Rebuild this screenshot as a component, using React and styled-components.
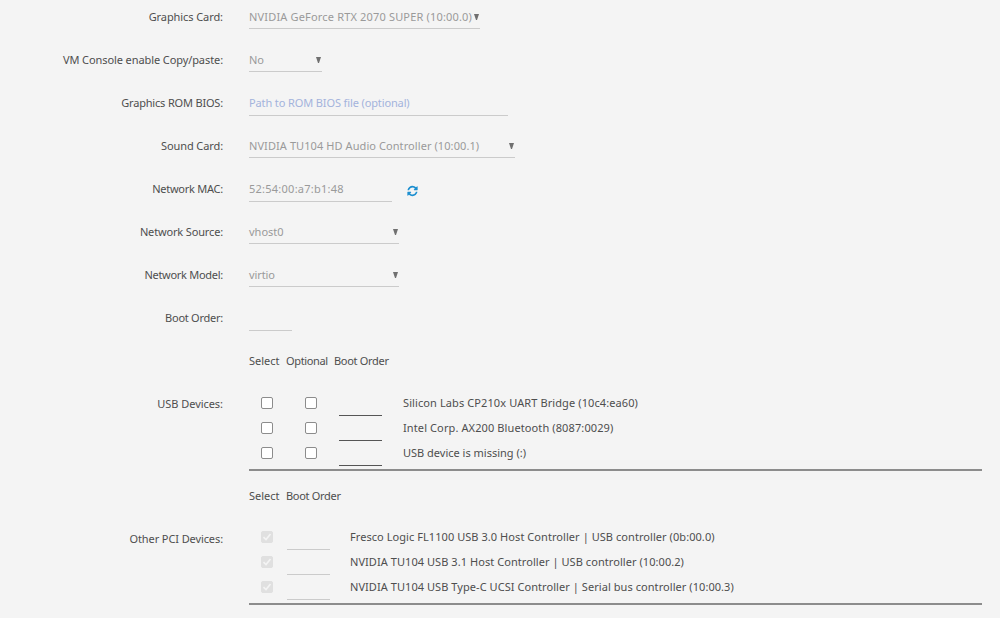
import styled, { createGlobalStyle } from "styled-components";

///////////////////// STYLED COMPONENTS /////////////////////
const GlobalStyle = createGlobalStyle`
    * {
        box-sizing: border-box;
    }

    body {
        margin: 0;
        background-color: #f4f4f4;
        color: #4e4e4e;
        font-family: "Noto Sans", "Open Sans", sans-serif;
        font-size: 11px;
        overflow: hidden;
    }
`

const Form = styled.main`
    width: 1000px;
    height: 618px;
    overflow: hidden;
`

const Row = styled.div`
    display: grid;
    grid-template-columns: 223px 733px;
    column-gap: 26px;
    height: ${props => props.$height || 43}px;
    margin-top: ${props => props.$shift || 0}px;
`

const Label = styled.label`
    height: 41px;
    line-height: ${props => props.$line || 41}px;
    text-align: right;
    white-space: nowrap;
    letter-spacing: ${props => props.$spacing || 0}px;
`

const Field = styled.div`
    display: flex;
    align-items: flex-start;
`

const Control = styled.div`
    display: flex;
    justify-content: space-between;
    width: ${props => props.$width}px;
    height: ${props => props.$height || 33}px;
    border-bottom: 1px solid #cbcbcb;
    line-height: 41px;
    white-space: nowrap;
    color: ${props => props.$hint ? "#a3b3dc" : "#9a9a9a"};
`

const Text = styled.span`
    letter-spacing: ${props => props.$spacing || 0}px;
`

const Arrow = styled.svg`
    flex-shrink: 0;
    width: 5px;
    height: 6px;
    margin: 18px 1px 0 0;
    fill: #707070;
`

const RefreshIcon = styled.svg`
    width: 11px;
    height: 12px;
    margin: 16.5px 0 0 15px;
    fill: #1c8fd0;
`

const Headings = styled.div`
    display: grid;
    grid-template-columns: ${props => props.$columns};
    line-height: ${props => props.$line || 41}px;
    height: 41px;
    white-space: nowrap;
`

const Devices = styled.div`
    height: 88px;
    padding-top: 8px;
    border-bottom: 2px solid #8c8c8c;
`

const Device = styled.div`
    display: grid;
    grid-template-columns: ${props => props.$columns};
    height: 25px;
    line-height: 24px;
    white-space: nowrap;
`

const Checkbox = styled.span`
    display: block;
    width: 12px;
    height: 12px;
    margin: 6px 0 0 12px;
    border: 1px solid ${props => props.$checked ? "#e0e0e0" : "#8c8c8c"};
    border-radius: 2px;
    background-color: ${props => props.$checked ? "#e0e0e0" : "#fff"};

    svg{
        display: block;
        width: 10px;
        height: 10px;
    }
`

const OrderInput = styled.span`
    display: block;
    width: 43px;
    height: 25px;
    border-bottom: 1px solid ${props => props.$disabled ? "#cbcbcb" : "#555"};
`

/////////////////////////////////////////////////////////////

const fields = [
    { label: "Graphics Card:", labelSpacing: -0.08, value: "NVIDIA GeForce RTX 2070 SUPER (10:00.0)", spacing: 0.17, width: 231, select: true },
    { label: "VM Console enable Copy/paste:", labelSpacing: -0.09, value: "No", width: 73, select: true },
    { label: "Graphics ROM BIOS:", labelSpacing: -0.18, value: "Path to ROM BIOS file (optional)", spacing: -0.12, width: 259, hint: true, height: 34 },
    { label: "Sound Card:", labelSpacing: -0.1, value: "NVIDIA TU104 HD Audio Controller (10:00.1)", spacing: 0.08, width: 266, select: true },
    { label: "Network MAC:", labelSpacing: -0.25, value: "52:54:00:a7:b1:48", spacing: 0.25, width: 143, refresh: true, height: 34 },
    { label: "Network Source:", labelSpacing: -0.15, value: "vhost0", width: 150, select: true },
    { label: "Network Model:", labelSpacing: -0.28, value: "virtio", spacing: -0.1, width: 150, select: true },
    { label: "Boot Order:", labelSpacing: -0.25, value: "", width: 43, height: 34 },
];

const usbDevices = [
    { name: "Silicon Labs CP210x UART Bridge (10c4:ea60)", spacing: 0.1 },
    { name: "Intel Corp. AX200 Bluetooth (8087:0029)", spacing: 0.11 },
    { name: "USB device is missing (:)", spacing: 0 },
];

const pciDevices = [
    { name: "Fresco Logic FL1100 USB 3.0 Host Controller | USB controller (0b:00.0)", spacing: 0.06 },
    { name: "NVIDIA TU104 USB 3.1 Host Controller | USB controller (10:00.2)", spacing: 0.06 },
    { name: "NVIDIA TU104 USB Type-C UCSI Controller | Serial bus controller (10:00.3)", spacing: 0.06 },
];

export default function App() {
    return (
        <Form>
            <GlobalStyle />
            {fields.map((field, index) => (
                <Row key={field.label} $shift={index === 0 ? -4 : 0}>
                    <Label $spacing={field.labelSpacing}>{field.label}</Label>
                    <Field>
                        <Control $width={field.width} $height={field.height} $hint={field.hint}>
                            <Text $spacing={field.spacing}>{field.value}</Text>
                            {field.select && <Arrow viewBox="0 0 5 6"><path d="M0 0h5L3 6H2z" /></Arrow>}
                        </Control>
                        {field.refresh && (
                            <RefreshIcon viewBox="0 0 1536 1792">
                                <path d="M1511 1056q0 5-1 7-64 268-268 434.5t-478 166.5q-146 0-282.5-55t-243.5-157l-129 129q-19 19-45 19t-45-19-19-45v-448q0-26 19-45t45-19h448q26 0 45 19t19 45-19 45l-137 137q71 66 161 102t187 36q134 0 250-65t186-179q11-17 53-117 8-23 30-23h192q13 0 22.5 9.5t9.5 22.5zm25-800v448q0 26-19 45t-45 19h-448q-26 0-45-19t-19-45 19-45l138-138q-148-137-349-137-134 0-250 65t-186 179q-11 17-53 117-8 23-30 23h-199q-13 0-22.5-9.5t-9.5-22.5v-7q65-268 270-434.5t480-166.5q146 0 284 55.5t245 156.5l130-129q19-19 45-19t45 19 19 45z" />
                            </RefreshIcon>
                        )}
                    </Field>
                </Row>
            ))}

            <Row>
                <span />
                <Headings $columns="37px 48px auto">
                    <Text>Select</Text>
                    <Text $spacing={-0.35}>Optional</Text>
                    <Text $spacing={-0.3}>Boot Order</Text>
                </Headings>
            </Row>
            <Row $height={91}>
                <Label $spacing={-0.05}>USB Devices:</Label>
                <Devices>
                    {usbDevices.map(device => (
                        <Device key={device.name} $columns="44px 46px 64px auto">
                            <Checkbox />
                            <Checkbox />
                            <OrderInput />
                            <Text $spacing={device.spacing}>{device.name}</Text>
                        </Device>
                    ))}
                </Devices>
            </Row>

            <Row>
                <span />
                <Headings $columns="37px auto" $line={43}>
                    <Text>Select</Text>
                    <Text $spacing={-0.3}>Boot Order</Text>
                </Headings>
            </Row>
            <Row $height={91}>
                <Label $spacing={-0.1} $line={43}>Other PCI Devices:</Label>
                <Devices>
                    {pciDevices.map(device => (
                        <Device key={device.name} $columns="38px 63px auto">
                            <Checkbox $checked>
                                <svg viewBox="0 0 10 10"><path d="M1.5 5.2 4 7.6 8.5 2" fill="none" stroke="#f4f4f4" strokeWidth="1.6" /></svg>
                            </Checkbox>
                            <OrderInput $disabled />
                            <Text $spacing={device.spacing}>{device.name}</Text>
                        </Device>
                    ))}
                </Devices>
            </Row>
        </Form>
    )
}
